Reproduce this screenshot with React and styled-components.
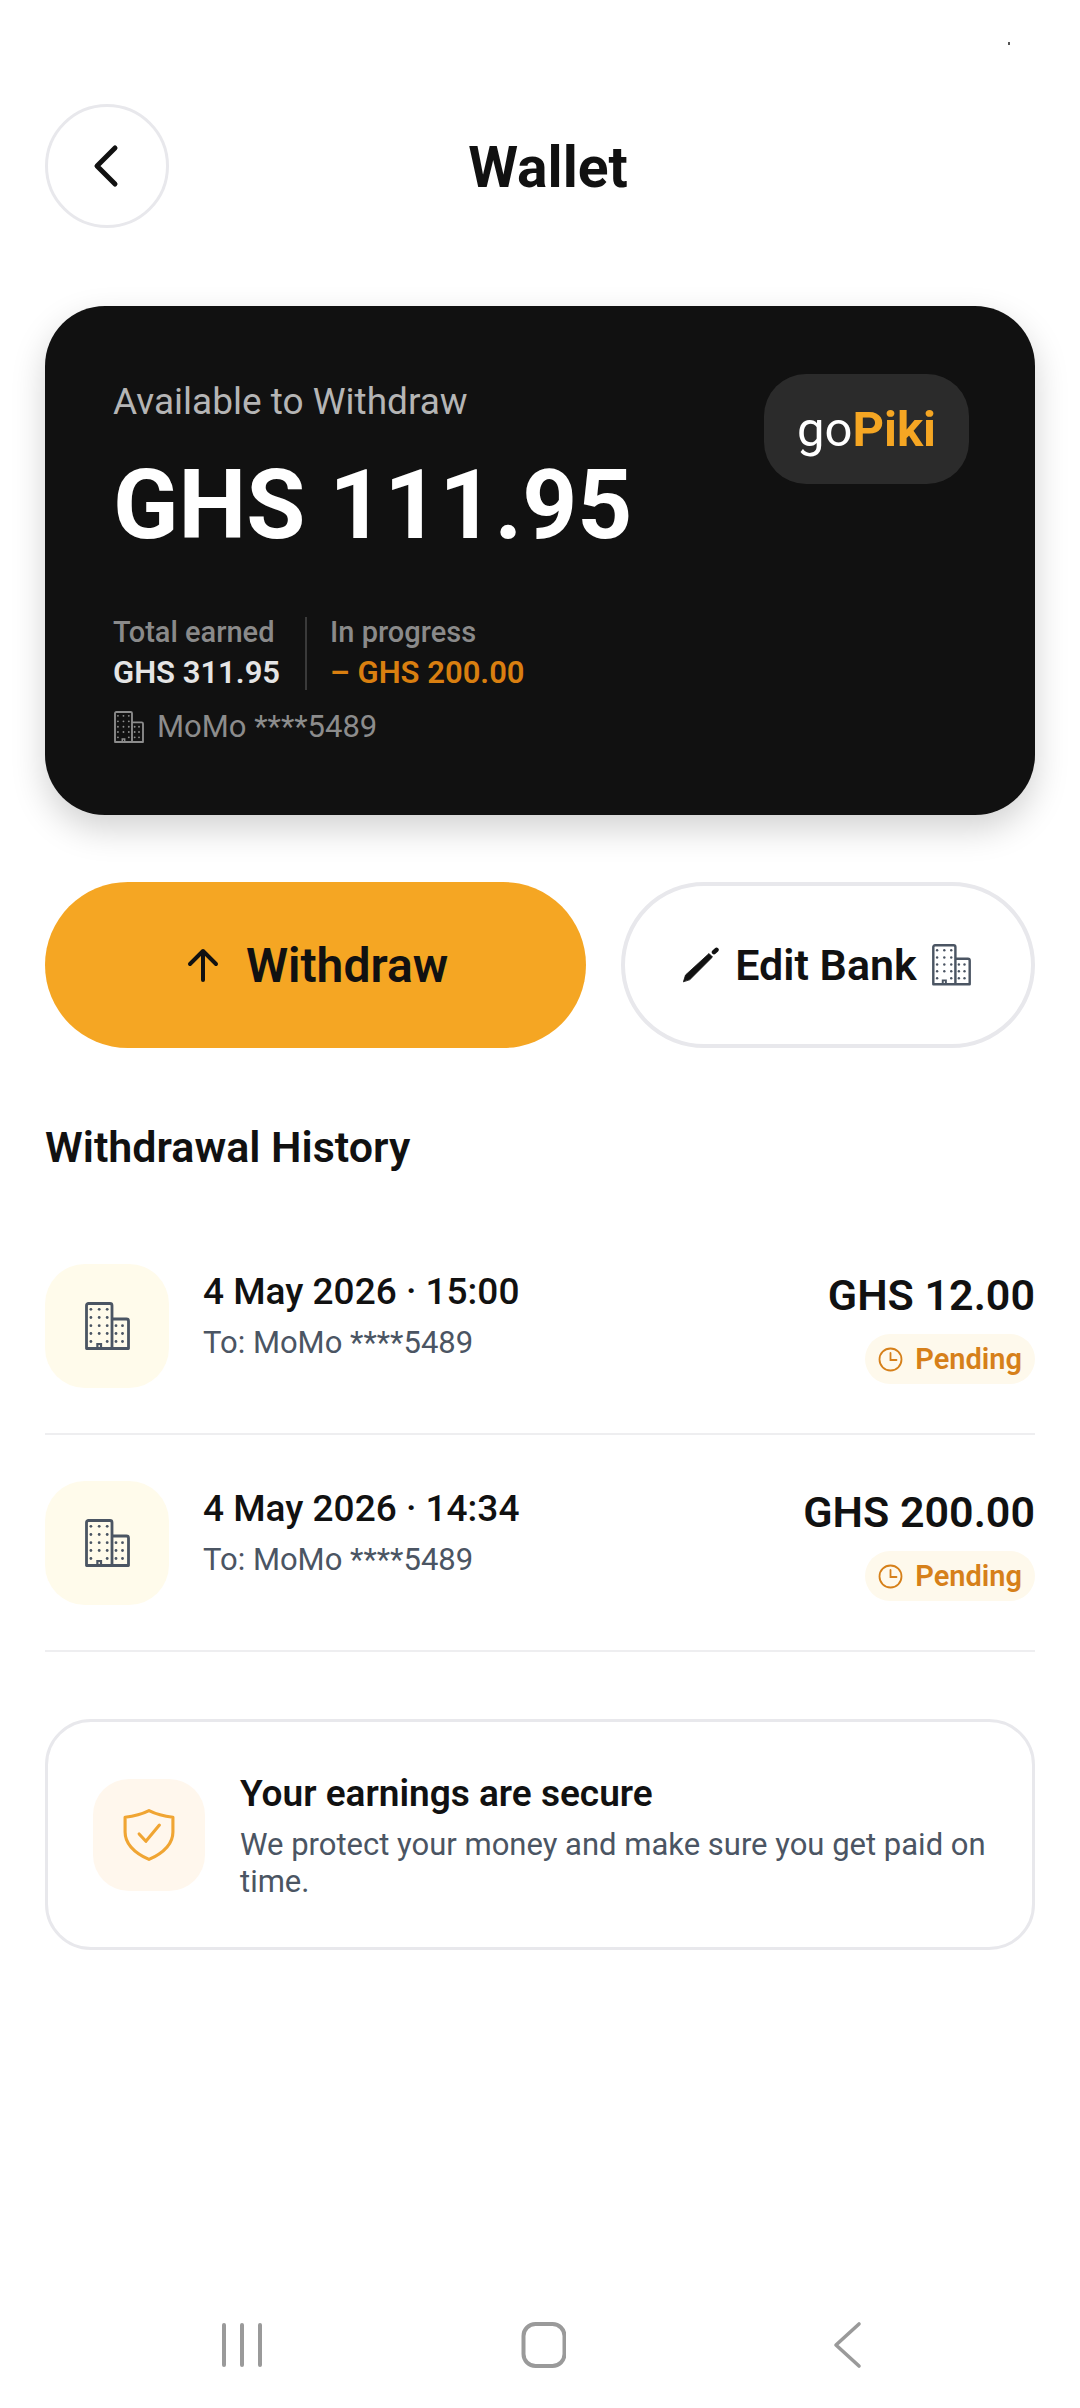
import React from "react";
import styled, { createGlobalStyle } from "styled-components";

const Global = createGlobalStyle`
  html, body { margin: 0; padding: 0; background: #fff; }
  body { font-family: Roboto, "Liberation Sans", sans-serif; color: #111; }
  * { box-sizing: border-box; }
`;

const Page = styled.div`
  position: relative;
  width: 1080px;
  height: 2408px;
  padding: 104px 45px 0;
  display: flex;
  flex-direction: column;
  background: #fff;
`;

const StatusSpeck = styled.span`
  position: absolute;
  top: 42px;
  left: 1008px;
  width: 2px;
  height: 3px;
  background: #555;
`;

const Header = styled.header`
  display: flex;
  align-items: center;
  padding-right: 108px;
`;

const BackButton = styled.button`
  width: 124px;
  height: 124px;
  flex: none;
  border-radius: 50%;
  background: #fff;
  border: 3px solid #e8e8ec;
  padding: 0;
  display: flex;
  align-items: center;
  justify-content: center;
`;

const Title = styled.h1`
  flex: 1;
  margin: 0;
  padding-top: 3px;
  text-align: center;
  font-size: 57px;
  line-height: 66px;
  font-weight: 700;
  color: #111;
`;

const Balance = styled.section`
  margin-top: 78px;
  height: 509px;
  border-radius: 60px;
  background: #111;
  box-shadow: 0 14px 34px rgba(0, 0, 0, 0.18);
  padding: 75px 68px 0;
  position: relative;
`;

const BalanceLabel = styled.div`
  font-size: 37px;
  line-height: 42px;
  color: #b5b5b5;
`;

const BalanceValue = styled.div`
  margin-top: 26px;
  font-size: 96px;
  line-height: 112px;
  font-weight: 700;
  color: #fff;
`;

const Brand = styled.div`
  position: absolute;
  top: 68px;
  right: 66px;
  width: 205px;
  height: 110px;
  border-radius: 42px;
  background: #2b2b2b;
  display: flex;
  align-items: center;
  justify-content: center;
  font-size: 49px;
  color: #fff;
`;

const BrandAccent = styled.span`
  color: #f5a623;
  font-weight: 700;
`;

const Stats = styled.div`
  margin-top: 56px;
  display: flex;
  align-items: stretch;
`;

const Stat = styled.div`
  display: flex;
  flex-direction: column;
  gap: 8px;
  padding-right: 25px;
  & + & {
    padding-left: 23px;
    padding-right: 0;
    border-left: 2px solid #3a3a3a;
  }
`;

const StatLabel = styled.div`
  font-size: 29px;
  line-height: 31px;
  font-weight: 500;
  color: #8a8a8a;
`;

const StatValue = styled.div`
  font-size: 31px;
  line-height: 34px;
  font-weight: 600;
  color: ${(p) => (p.$accent ? "#d97f10" : "#e5e5e5")};
`;

const Account = styled.div`
  margin-top: 17px;
  padding-left: 1px;
  display: flex;
  align-items: center;
  gap: 13px;
  font-size: 31px;
  line-height: 40px;
  color: #8c8c8c;
`;

const Actions = styled.div`
  margin-top: 67px;
  display: flex;
  gap: 35px;
`;

const PrimaryAction = styled.button`
  width: 541px;
  height: 166px;
  border: 0;
  border-radius: 83px;
  background: #f5a623;
  display: flex;
  align-items: center;
  justify-content: center;
  gap: 27px;
  padding: 0 0 0 4px;
  font-family: inherit;
  font-size: 48px;
  font-weight: 600;
  color: #111;
`;

const SecondaryAction = styled.button`
  flex: 1;
  height: 166px;
  border: 4px solid #e8e8ec;
  border-radius: 83px;
  background: #fff;
  display: flex;
  align-items: center;
  justify-content: center;
  gap: 15px;
  font-family: inherit;
  font-size: 43px;
  font-weight: 600;
  color: #111;
  padding: 0 3px 0 0;
`;

const SectionTitle = styled.h2`
  margin: 74px 0 0;
  font-size: 43px;
  line-height: 50px;
  font-weight: 600;
  color: #111;
`;

const History = styled.div`
  margin-top: 46px;
  display: flex;
  flex-direction: column;
`;

const Row = styled.div`
  height: 217px;
  border-bottom: 2px solid #eeeef0;
  display: flex;
  align-items: flex-start;
  padding-top: 46px;
`;

const RowIcon = styled.div`
  width: 124px;
  height: 124px;
  flex: none;
  border-radius: 40px;
  background: #fffbeb;
  display: flex;
  align-items: center;
  justify-content: center;
`;

const RowMain = styled.div`
  flex: 1;
  margin-left: 34px;
  padding-top: 5px;
`;

const RowDate = styled.div`
  font-size: 37px;
  line-height: 46px;
  font-weight: 500;
  color: #111;
`;

const RowTo = styled.div`
  margin-top: 8px;
  font-size: 31px;
  line-height: 40px;
  color: #4b5563;
`;

const RowSide = styled.div`
  display: flex;
  flex-direction: column;
  align-items: flex-end;
  gap: 14px;
  padding-top: 6px;
`;

const Amount = styled.div`
  font-size: 43px;
  line-height: 50px;
  font-weight: 600;
  color: #111;
`;

const Pill = styled.div`
  height: 50px;
  padding: 0 13px;
  border-radius: 25px;
  background: #fef9ec;
  display: flex;
  align-items: center;
  gap: 12px;
  font-size: 29px;
  font-weight: 600;
  color: #d6801a;
`;

const Notice = styled.section`
  margin-top: 67px;
  height: 231px;
  border: 3px solid #e8e8ec;
  border-radius: 46px;
  padding: 0 45px;
  display: flex;
  align-items: center;
  gap: 35px;
`;

const NoticeIcon = styled.div`
  width: 112px;
  height: 112px;
  flex: none;
  border-radius: 36px;
  background: #fff7ed;
  display: flex;
  align-items: center;
  justify-content: center;
`;

const NoticeBody = styled.div`
  flex: 1;
  padding-top: 3px;
`;

const NoticeTitle = styled.div`
  font-size: 37px;
  line-height: 44px;
  font-weight: 600;
  color: #111;
`;

const NoticeText = styled.div`
  margin-top: 10px;
  font-size: 31px;
  line-height: 37px;
  color: #4b5563;
`;

const NavBar = styled.nav`
  position: absolute;
  left: 0;
  right: 0;
  top: 2318px;
  height: 54px;
`;

const NavIcon = styled.svg`
  position: absolute;
  top: 0;
  left: ${(p) => p.$x}px;
`;

const Building = ({ size = 45, stroke = "#4b5563", w = 2.8 }) => {
  const main = [];
  [7.3, 15.5, 23.7, 31.5, 39.5].forEach((y) =>
    [5.9, 14.2, 22.2].forEach((x) => {
      if (!(y === 39.5 && x === 14.2)) main.push([x, y]);
    })
  );
  const side = [];
  [23.7, 31.5, 39.5].forEach((y) =>
    [31, 37.5].forEach((x) => side.push([x, y]))
  );
  return (
    <svg width={size} height={(size * 48) / 45} viewBox="0 0 45 48" fill="none">
      <path
        d="M1.5 46.5V3.5a2 2 0 0 1 2-2h21.5a2 2 0 0 1 2 2v43M27 17h14.5a2 2 0 0 1 2 2v27.5M1.5 46.5h42"
        stroke={stroke}
        strokeWidth={w}
        strokeLinejoin="round"
        strokeLinecap="round"
      />
      <path d="M12.4 46.5v-4.5h3.6v4.5" stroke={stroke} strokeWidth={w * 0.8} />
      {[...main, ...side].map(([x, y]) => (
        <circle key={`${x}-${y}`} cx={x} cy={y} r="1.4" fill={stroke} />
      ))}
    </svg>
  );
};

const Clock = () => (
  <svg width="25" height="25" viewBox="0 0 25 25" fill="none" stroke="#d6801a" strokeWidth="1.8" strokeLinecap="round">
    <circle cx="12.5" cy="12.5" r="11" />
    <path d="M12.5 6v7h6" />
  </svg>
);

const items = [
  { date: "4 May 2026 · 15:00", amount: "GHS 12.00" },
  { date: "4 May 2026 · 14:34", amount: "GHS 200.00" },
];

export default function App() {
  return (
    <Page>
      <Global />
      <StatusSpeck />
      <Header>
        <BackButton aria-label="Back">
          <svg width="30" height="44" viewBox="0 0 30 44" fill="none" stroke="#111" strokeWidth="5" strokeLinecap="round" strokeLinejoin="round">
            <path d="M23 4 5 22l18 18" />
          </svg>
        </BackButton>
        <Title>Wallet</Title>
      </Header>
      <Balance>
        <BalanceLabel>Available to Withdraw</BalanceLabel>
        <BalanceValue>GHS 111.95</BalanceValue>
        <Brand>
          go<BrandAccent>Piki</BrandAccent>
        </Brand>
        <Stats>
          <Stat>
            <StatLabel>Total earned</StatLabel>
            <StatValue>GHS 311.95</StatValue>
          </Stat>
          <Stat>
            <StatLabel>In progress</StatLabel>
            <StatValue $accent>– GHS 200.00</StatValue>
          </Stat>
        </Stats>
        <Account>
          <Building size={30} stroke="#8c8c8c" />
          MoMo ****5489
        </Account>
      </Balance>
      <Actions>
        <PrimaryAction>
          <svg width="32" height="34" viewBox="0 0 32 34" fill="none" stroke="#111" strokeWidth="4" strokeLinecap="round" strokeLinejoin="round">
            <path d="M16 32V3M3 16 16 3l13 13" />
          </svg>
          Withdraw
        </PrimaryAction>
        <SecondaryAction>
          <svg width="38" height="36" viewBox="0 0 38 36" fill="none" stroke="#111" strokeLinecap="round">
            <path d="M1.5 34.5 3.5 28 27 6.5l3.5 3.5L8 32.5Z" fill="#111" strokeWidth="0.8" strokeLinejoin="round" />
            <path d="M32 5.2 34.5 2.8" strokeWidth="4.5" />
          </svg>
          Edit Bank
          <Building size={39} />
        </SecondaryAction>
      </Actions>
      <SectionTitle>Withdrawal History</SectionTitle>
      <History>
        {items.map((it) => (
          <Row key={it.date}>
            <RowIcon>
              <Building />
            </RowIcon>
            <RowMain>
              <RowDate>{it.date}</RowDate>
              <RowTo>To: MoMo ****5489</RowTo>
            </RowMain>
            <RowSide>
              <Amount>{it.amount}</Amount>
              <Pill>
                <Clock />
                Pending
              </Pill>
            </RowSide>
          </Row>
        ))}
      </History>
      <Notice>
        <NoticeIcon>
          <svg width="52" height="52" viewBox="0 0 50 50" fill="none" stroke="#f0a533" strokeWidth="3" strokeLinecap="round" strokeLinejoin="round">
            <path d="M25 1.5C31 4.5 40 7 48 8V22C48 35 37 43 25 48.5 13 43 2 35 2 22V8C10 7 19 4.5 25 1.5Z" />
            <path d="M15.5 24l6.5 7L35 15.5" />
          </svg>
        </NoticeIcon>
        <NoticeBody>
          <NoticeTitle>Your earnings are secure</NoticeTitle>
          <NoticeText>We protect your money and make sure you get paid on time.</NoticeText>
        </NoticeBody>
      </Notice>
      <NavBar>
        <NavIcon $x={220} width="44" height="54" viewBox="0 0 44 54" fill="none" stroke="#9a9a9a" strokeWidth="4" strokeLinecap="round">
          <path d="M4 7v40M22 7v40M40 7v40" />
        </NavIcon>
        <NavIcon $x={520} width="46" height="54" viewBox="0 0 46 54" fill="none" stroke="#9a9a9a" strokeWidth="4">
          <rect x="3.5" y="6" width="41" height="42" rx="12" />
        </NavIcon>
        <NavIcon $x={830} width="34" height="54" viewBox="0 0 34 54" fill="none" stroke="#9a9a9a" strokeWidth="3.6" strokeLinecap="round" strokeLinejoin="round">
          <path d="M29 6 6 27l23 21" />
        </NavIcon>
      </NavBar>
    </Page>
  );
}
